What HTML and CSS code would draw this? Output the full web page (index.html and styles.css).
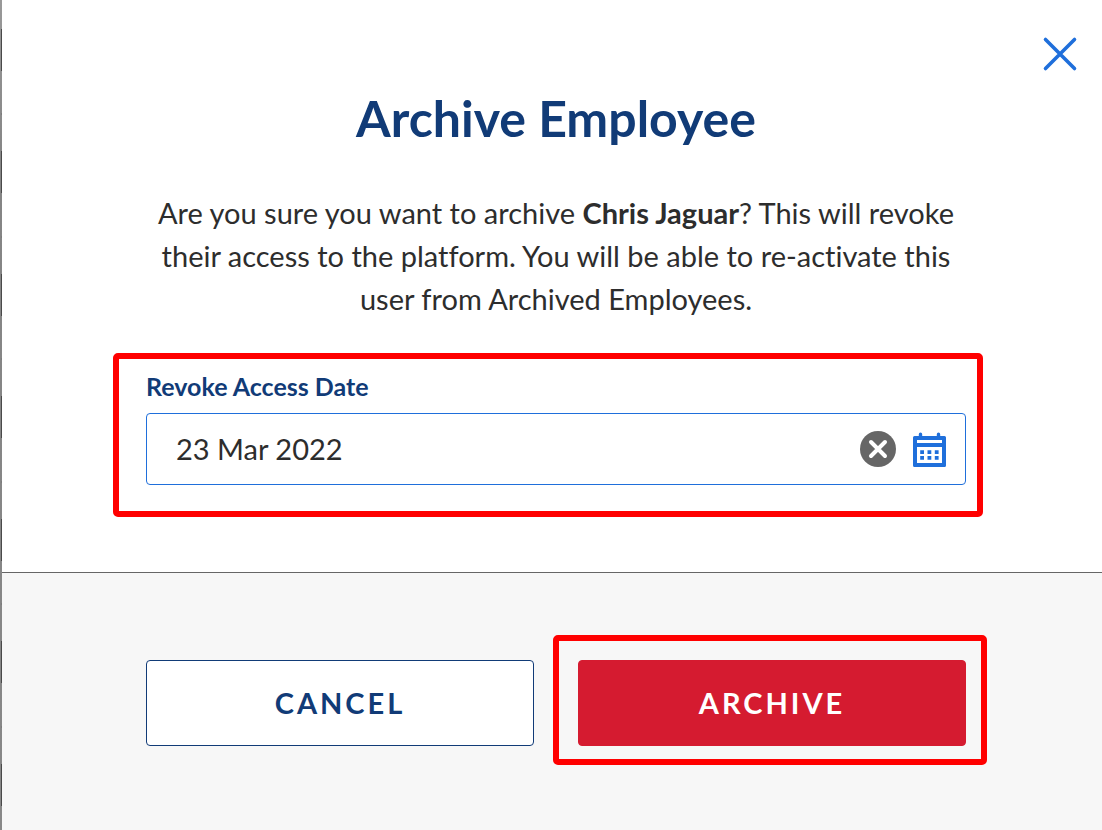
FILE: index.html
```html
<!DOCTYPE html>
<html lang="en">
<head>
<meta charset="utf-8">
<title>Archive Employee</title>
<link rel="stylesheet" href="styles.css">
</head>
<body>
<div class="page">
  <div class="backdrop"></div>
  <form class="dialog" role="dialog" aria-labelledby="dialog-title">
    <button class="close" type="button" aria-label="Close">
      <svg width="36" height="36" viewBox="0 0 36 36" fill="none" stroke="currentColor" stroke-width="3.6" stroke-linecap="round"><path d="M3.500 3.500L32.500 32.500M32.500 3.500L3.500 32.500"/></svg>
    </button>
    <div class="body">
      <div class="column">
        <h1 class="title" id="dialog-title">Archive Employee</h1>
        <p class="message">Are you sure you want to archive <strong>Chris Jaguar</strong>? This will revoke their access to the platform. You will be able to re-activate this user from Archived Employees.</p>
        <div class="field">
          <label class="label" for="revoke-date">Revoke Access Date</label>
          <div class="control">
            <input class="input" id="revoke-date" type="text" value="23 Mar 2022">
            <button class="icon-button clear" type="button" aria-label="Clear date">
              <svg width="36" height="36" viewBox="0 0 36 36" fill="none"><circle cx="18" cy="18" r="18" fill="#666"/><path d="M11 11L25 25M25 11L11 25" stroke="#fff" stroke-width="4" stroke-linecap="round"/></svg>
            </button>
            <button class="icon-button calendar" type="button" aria-label="Open calendar">
              <svg width="34" height="36" viewBox="0 0 34 36" fill="currentColor"><path fill-rule="evenodd" d="M1.500 5H5.800V3.200a1.700 1.700 0 0 1 3.400 0V5H23.800V3.200a1.700 1.700 0 0 1 3.400 0V5H31.500a1.500 1.500 0 0 1 1.500 1.500V34.500a1.500 1.500 0 0 1-1.500 1.500H1.500a1.500 1.500 0 0 1-1.500-1.500V6.500a1.500 1.500 0 0 1 1.500-1.500ZM4 9V12H29V9ZM4 16V32H29V16Z"/><path d="M7.200 19.200h3.800v3.800H7.200zM14.500 19.200h3.800v3.800h-3.800zM21.800 19.200h3.800v3.800h-3.800zM7.200 25h3.800v3.800H7.200zM14.500 25h3.800v3.800h-3.800zM21.800 25h3.800v3.800h-3.800z"/></svg>
            </button>
          </div>
        </div>
      </div>
    </div>
    <div class="footer">
      <div class="column actions">
        <button class="button cancel" type="button">CANCEL</button>
        <button class="button archive" type="submit">ARCHIVE</button>
      </div>
    </div>
  </form>
</div>
</body>
</html>
```
FILE: styles.css
```css
* {
  box-sizing: border-box;
}

body {
  margin: 0;
  background: #fff;
  color: #2d2d2d;
  font-family: Lato, sans-serif;
  font-size: 29px;
  font-variant-ligatures: none;
}

button,
input {
  font: inherit;
}

.page {
  display: flex;
  min-height: 100vh;
}

.backdrop {
  flex: none;
  width: 2px;
  background:
    linear-gradient(#4a4a4a 0 42px, transparent 42px 84px, #7c7c7c 84px 86px, transparent 86px 122px, #4a4a4a 122px 164px, transparent 164px 207px, #7c7c7c 207px 209px, transparent 209px) 1px 29px / 1px 245px repeat-y,
    linear-gradient(#999 0, #858585 20%, #888 100%);
}

.dialog {
  position: relative;
  flex: 1;
  display: flex;
  flex-direction: column;
  margin: 0;
}

.close {
  position: absolute;
  top: 36px;
  right: 24px;
  display: flex;
  padding: 0;
  border: 0;
  background: none;
  color: #1f6fdb;
}

.body {
  padding: 87px 136px 87px 144px;
  border-bottom: 1px solid #666;
}

.column {
  max-width: 820px;
  margin: 0 auto;
}

.title {
  margin: 0 0 42px;
  color: #113b77;
  font-size: 50px;
  font-weight: 700;
  line-height: 62px;
  text-align: center;
}

.message {
  margin: 0 0 50px;
  line-height: 43px;
  text-align: center;
}

.field {
  position: relative;
}

/* Red callout frames drawn around the field and the archive button */
.field::after,
.archive::after {
  content: "";
  position: absolute;
  border: 6px solid #f00;
  border-radius: 5px;
  pointer-events: none;
}

.field::after {
  inset: -17px -17px -32px -33px;
}

.label {
  display: block;
  margin-bottom: 11px;
  color: #113b77;
  font-size: 25px;
  font-weight: 700;
  line-height: 32px;
}

.control {
  display: flex;
  align-items: center;
  gap: 17px;
  height: 72px;
  padding: 0 18px 0 29px;
  border: 1px solid #1f6fdb;
  border-radius: 4px;
  background: #fff;
}

.input {
  flex: 1;
  min-width: 0;
  padding: 0 0 2px;
  border: 0;
  outline: 0;
  background: none;
  color: #2d2d2d;
}

.icon-button {
  display: flex;
  flex: none;
  padding: 0;
  border: 0;
  background: none;
}

.calendar {
  color: #1f6fdb;
}

.footer {
  flex: 1;
  padding: 87px 136px 84px 144px;
  background: #f7f7f7;
}

.actions {
  display: grid;
  grid-template-columns: 1fr 1fr;
  gap: 44px;
}

.button {
  position: relative;
  height: 86px;
  padding: 0 0 2px;
  border: 1px solid #113b77;
  border-radius: 4px;
  background: #fff;
  color: #113b77;
  font-weight: 700;
  letter-spacing: 3px;
}

.archive {
  border-color: #d51b30;
  background: #d51b30;
  color: #fff;
}

.archive::after {
  inset: -26px -22px -20px -26px;
}
```
